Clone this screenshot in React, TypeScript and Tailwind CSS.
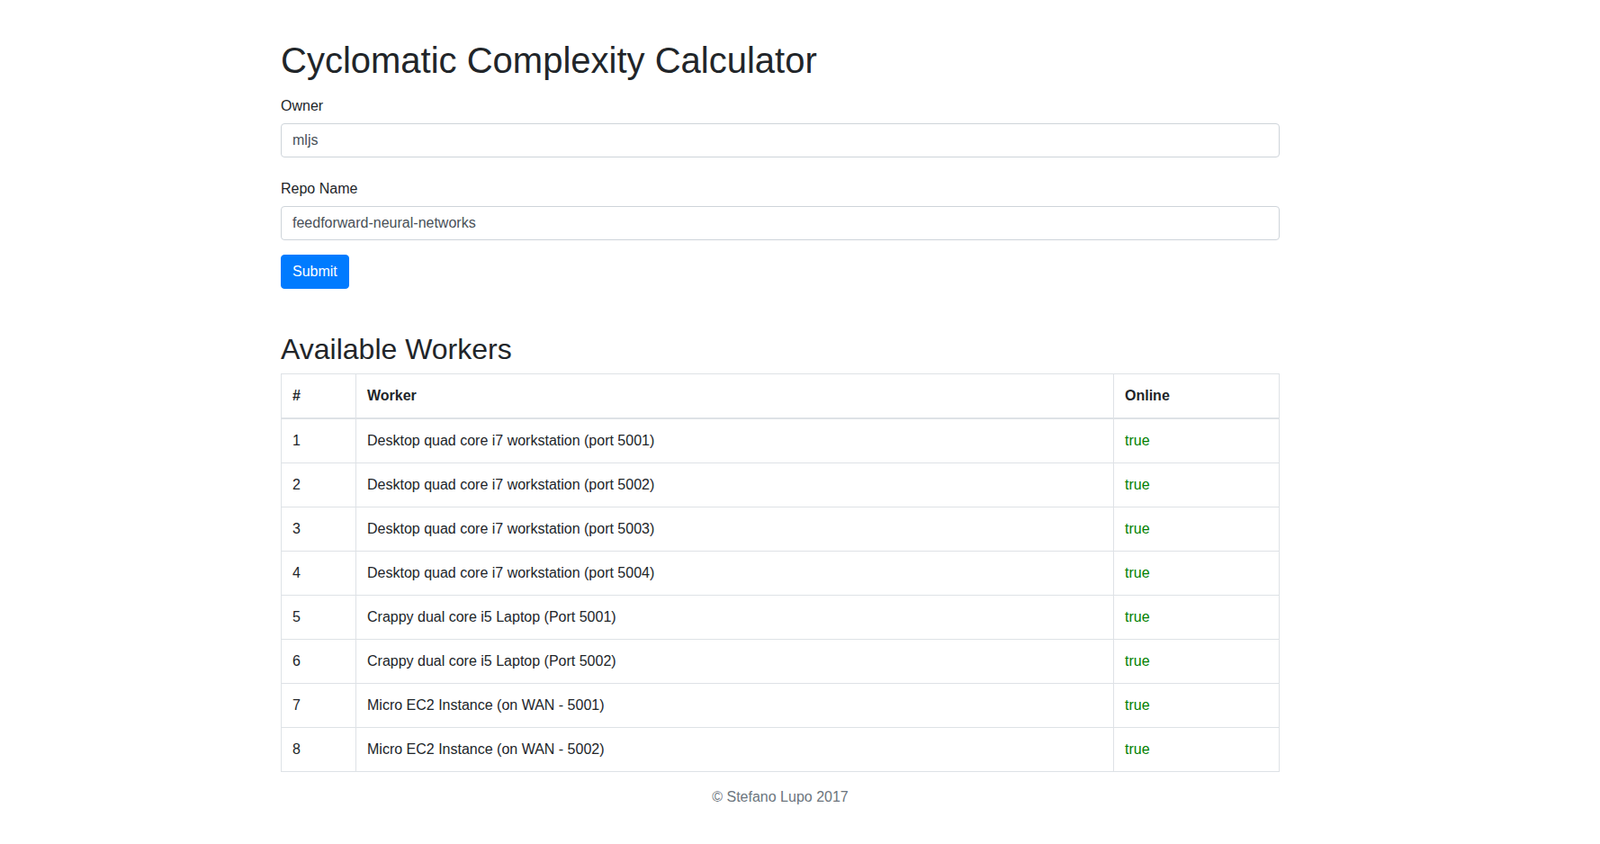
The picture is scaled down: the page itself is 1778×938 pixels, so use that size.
import React from 'react';

const WORKERS = [
  'Desktop quad core i7 workstation (port 5001)',
  'Desktop quad core i7 workstation (port 5002)',
  'Desktop quad core i7 workstation (port 5003)',
  'Desktop quad core i7 workstation (port 5004)',
  'Crappy dual core i5 Laptop (Port 5001)',
  'Crappy dual core i5 Laptop (Port 5002)',
  'Micro EC2 Instance (on WAN - 5001)',
  'Micro EC2 Instance (on WAN - 5002)',
];

export default function App() {
  const inputClass =
    'block w-full h-[38px] px-3 rounded border border-[#ced4da] bg-white text-base text-[#495057] outline-none';
  const labelClass = 'block text-base leading-6 pt-px mb-[7px] text-[#212529]';
  const cellClass = 'border border-[#dee2e6] p-3 leading-6 text-left align-top';

  return (
    <div className="min-h-screen bg-white font-['Liberation_Sans',Arial,sans-serif] text-[#212529]">
      <div className="ml-[312px] w-[1110px] pt-[43px]">
        <h1 className="text-[40px] leading-[48px] font-medium mb-[14px]">Cyclomatic Complexity Calculator</h1>

        <form onSubmit={e => e.preventDefault()}>
          <div className="mb-[22px]">
            <label className={labelClass}>Owner</label>
            <input className={inputClass} defaultValue="mljs" />
          </div>
          <div className="mb-[16px]">
            <label className={labelClass}>Repo Name</label>
            <input className={inputClass} defaultValue="feedforward-neural-networks" />
          </div>
          <button
            type="submit"
            className="h-[38px] px-3 rounded border border-[#007bff] bg-[#007bff] text-white text-base leading-6"
          >
            Submit
          </button>
        </form>

        <h2 className="mt-[48px] text-[32px] leading-[38.4px] font-medium mb-2">Available Workers</h2>

        <table className="w-full border-collapse border border-[#dee2e6]">
          <thead>
            <tr>
              <th className={`${cellClass} w-[83px] border-b-2 font-bold`}>#</th>
              <th className={`${cellClass} border-b-2 font-bold`}>Worker</th>
              <th className={`${cellClass} w-[184px] border-b-2 font-bold`}>Online</th>
            </tr>
          </thead>
          <tbody>
            {WORKERS.map((w, i) => (
              <tr key={i}>
                <td className={cellClass}>{i + 1}</td>
                <td className={cellClass}>{w}</td>
                <td className={`${cellClass} text-[#008000]`}>true</td>
              </tr>
            ))}
          </tbody>
        </table>

        <footer className="mt-[16px] text-center leading-6 text-[#6c757d]">© Stefano Lupo 2017</footer>
      </div>
    </div>
  );
}
